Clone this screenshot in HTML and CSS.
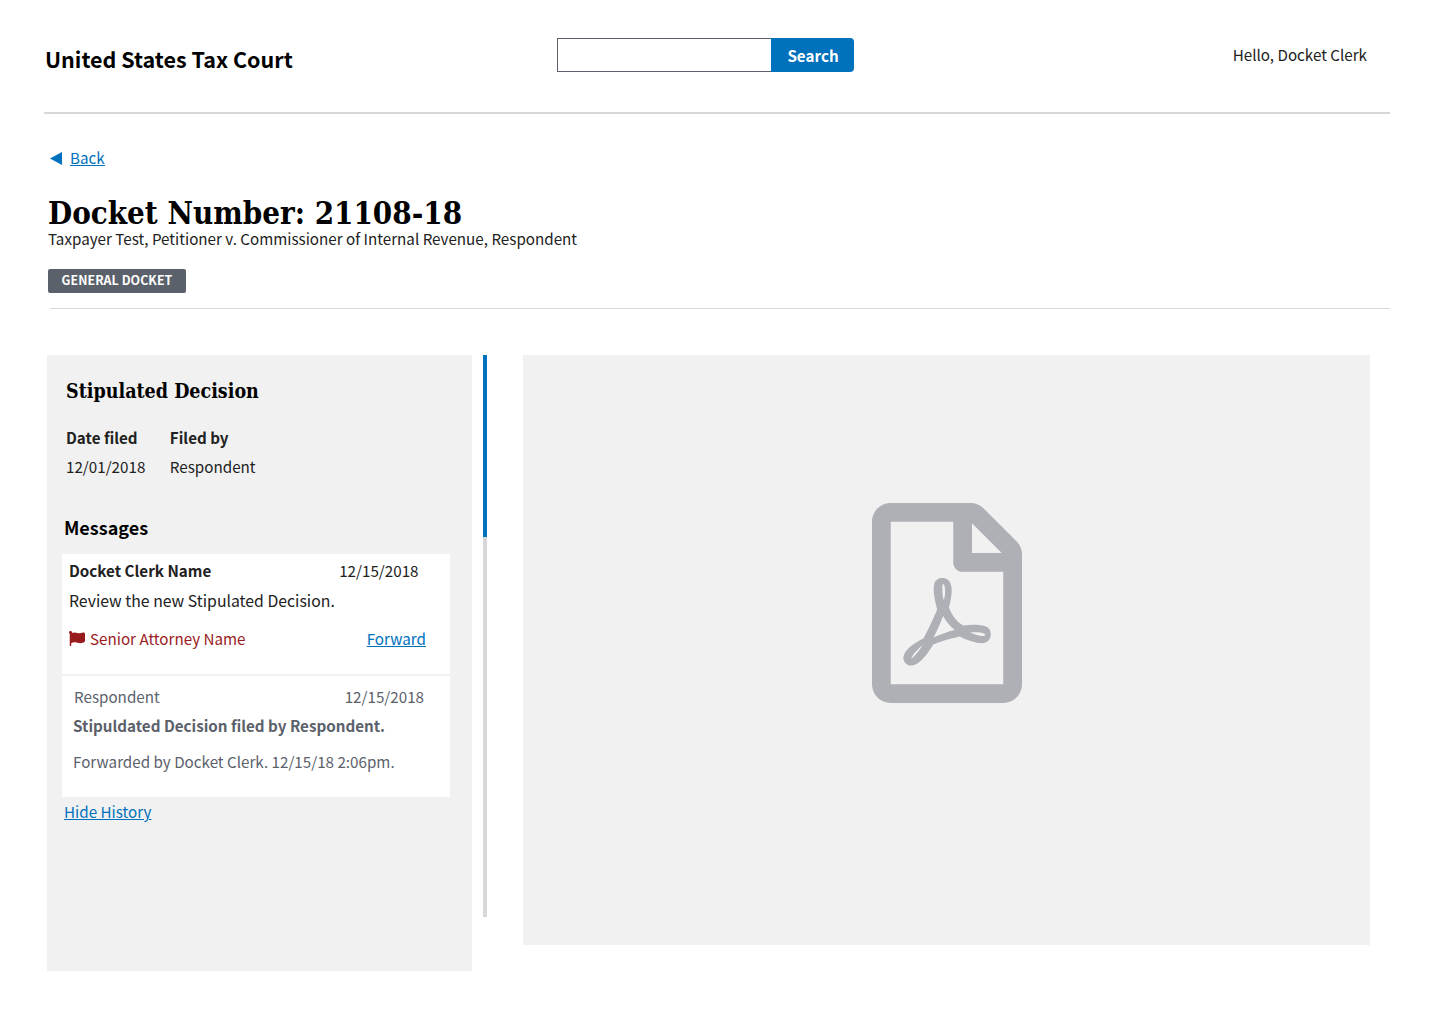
FILE: index.html
```html
<!DOCTYPE html>
<html lang="en">
<head>
    <meta charset="UTF-8">
    <meta name="viewport" content="width=device-width, initial-scale=1.0">
    <title>Docket Number 21108-18</title>
    <link rel="stylesheet" href="styles.css">
</head>
<body>
    <!-- Header -->
    <header class="site-header">
        <div class="site-title">United States Tax Court</div>
        <form class="search">
            <input class="search-input" type="text" aria-label="Search">
            <button class="search-button" type="button">Search</button>
        </form>
        <div class="greeting">Hello, Docket Clerk</div>
    </header>

    <main>
        <a class="back-link" href="#">
            <svg class="back-arrow" viewBox="0 0 12 12" preserveAspectRatio="none"><path d="M12 0v12L0 6z"/></svg>
            <span>Back</span>
        </a>

        <div class="case-head">
            <h1 class="docket-number">Docket Number: 21108-18</h1>
            <p class="case-caption">Taxpayer Test, Petitioner v. Commissioner of Internal Revenue, Respondent</p>
            <span class="tag">General Docket</span>
        </div>
        <hr class="case-rule">

        <div class="workspace">
            <!-- Document details -->
            <section class="details">
                <h2 class="doc-title">Stipulated Decision</h2>
                <div class="meta">
                    <div class="meta-col">
                        <div class="meta-label">Date filed</div>
                        <div class="meta-value">12/01/2018</div>
                    </div>
                    <div class="meta-col">
                        <div class="meta-label">Filed by</div>
                        <div class="meta-value">Respondent</div>
                    </div>
                </div>

                <h3 class="messages-title">Messages</h3>
                <div class="messages">
                    <div class="message">
                        <div class="message-row">
                            <strong>Docket Clerk Name</strong>
                            <span class="message-date">12/15/2018</span>
                        </div>
                        <p class="message-text">Review the new Stipulated Decision.</p>
                        <div class="message-row message-actions">
                            <span class="assignee">
                                <svg class="flag" viewBox="0 0 512 512" preserveAspectRatio="none"><path d="M336.174 80c-49.132 0-93.305-32-161.913-32-31.301 0-58.303 6.482-80.721 15.168a48.04 48.04 0 0 0 2.142-20.727C93.067 19.575 74.167 1.594 51.201.104 23.242-1.71 0 20.431 0 48c0 17.764 9.657 33.262 24 41.562V496c0 8.837 7.163 16 16 16h16c8.837 0 16-7.163 16-16v-83.443C109.869 395.28 143.259 384 199.826 384c49.132 0 93.305 32 161.913 32 58.479 0 101.972-22.617 128.548-39.981C503.846 367.161 512 352.051 512 335.855V95.937c0-34.459-35.264-57.768-66.904-44.117C409.193 67.309 371.641 80 336.174 80z"/></svg>
                                Senior Attorney Name
                            </span>
                            <a class="link" href="#">Forward</a>
                        </div>
                    </div>
                    <div class="message message-old">
                        <div class="message-row message-from">
                            <span>Respondent</span>
                            <span>12/15/2018</span>
                        </div>
                        <p class="message-subject">Stipuldated Decision filed by Respondent.</p>
                        <p class="message-forward">Forwarded by Docket Clerk. 12/15/18 2:06pm.</p>
                    </div>
                </div>
                <a class="link history-link" href="#">Hide History</a>
            </section>

            <div class="scrollbar"><div class="scrollbar-thumb"></div></div>

            <!-- PDF preview -->
            <section class="preview">
                <svg class="pdf-icon" viewBox="0 0 384 512"><path d="M369.9 97.9L286 14C277 5 264.8-.1 252.1-.1H48C21.5 0 0 21.5 0 48v416c0 26.5 21.5 48 48 48h288c26.5 0 48-21.5 48-48V131.9c0-12.7-5.1-25-14.1-34zM332.1 128H256V51.9l76.1 76.1zM48 464V48h160v104c0 13.3 10.7 24 24 24h104v288H48zm250.2-143.7c-12.2-12-47-8.7-64.4-6.5-17.2-10.5-28.7-25-36.8-46.3 3.9-16.1 10.1-40.6 5.4-56-4.2-26.2-37.8-23.6-42.6-5.9-4.4 16.1-.4 38.5 7 67.1-10 23.9-24.9 56-35.4 74.4-20 10.3-47 26.2-51 46.2-3.3 15.8 26 55.2 76.1-31.2 22.4-7.4 46.8-16.5 68.4-20.1 18.9 10.2 41 17 55.8 17 25.5 0 28-28.2 17.5-38.7zm-198.1 77.8c5.1-13.7 24.5-29.5 30.4-35-19 30.3-30.4 35.7-30.4 35zm81.6-190.6c7.4 0 6.7 32.1 1.8 40.8-4.4-13.9-4.3-40.8-1.8-40.8zm-24.4 136.6c9.7-16.9 18-37 24.7-54.7 8.3 15.1 18.9 27.2 30.1 35.5-20.8 4.3-38.9 13.1-54.8 19.2zm131.6-5s-5 6-37.3-7.8c35.1-2.6 40.9 5.4 37.3 7.8z"/></svg>
            </section>
        </div>
    </main>
</body>
</html>
```

FILE: styles.css
```css
body {
    margin: 0;
    background-color: #fff;
    color: #212121;
    font-family: "Noto Sans CJK SC", "Open Sans", sans-serif;
    font-size: 15.2px;
    line-height: 24px;
}
p, h1, h2, h3 {
    margin: 0;
}

/* Header */
.site-header {
    display: flex;
    height: 112px;
    margin: 0 50px 0 44px;
    border-bottom: 2px solid #d6d7d9;
}
.site-title {
    width: 513px;
    padding: 45px 0 0 1px;
    box-sizing: border-box;
    color: #000;
    font-size: 21.5px;
    font-weight: 700;
    line-height: 28px;
}
.search {
    display: flex;
    height: 34px;
    margin-top: 38px;
}
.search-input {
    width: 214px;
    height: 34px;
    box-sizing: border-box;
    border: 1px solid #5b616b;
    border-right: 0;
    border-radius: 0;
    padding: 0;
}
.search-button {
    width: 83px;
    height: 34px;
    border: 0;
    border-radius: 0 4px 4px 0;
    background-color: #0071bc;
    color: #fff;
    font-family: inherit;
    font-size: 15.2px;
    font-weight: 700;
    line-height: 24px;
    padding: 0 0 0 1px;
}
.greeting {
    margin-left: auto;
    padding: 42px 23px 0 0;
}

/* Case heading */
.back-link {
    display: flex;
    align-items: center;
    width: max-content;
    margin: 31px 0 0 50px;
    color: #0071bc;
}
.back-link span {
    margin-left: 8px;
    text-decoration: underline;
}
.back-arrow {
    width: 12px;
    height: 13px;
    fill: #0071bc;
    margin-top: 3px;
}
.case-head {
    padding: 24px 0 0 48px;
}
.docket-number {
    color: #000;
    font-family: "DejaVu Serif Condensed", "DejaVu Serif", serif;
    font-stretch: condensed;
    font-size: 31px;
    font-weight: 700;
    line-height: 40px;
}
.case-caption {
    margin-top: -6px;
    line-height: 22px;
}
.tag {
    display: block;
    width: 138px;
    height: 24px;
    margin-top: 20px;
    border-radius: 2px;
    background-color: #5b616b;
    color: #fff;
    font-size: 12.4px;
    font-weight: 700;
    line-height: 22px;
    text-align: center;
    text-transform: uppercase;
    letter-spacing: 0.05px;
}
.case-rule {
    height: 1px;
    margin: 15px 50px 0;
    border: 0;
    background-color: #d6d7d9;
}

/* Panels */
.workspace {
    display: flex;
    align-items: flex-start;
    margin: 46px 0 0 47px;
}
.details {
    width: 425px;
    height: 616px;
    box-sizing: border-box;
    padding: 21px 22px 0 15px;
    background-color: #f1f1f1;
}
.doc-title {
    margin-left: 4px;
    color: #000;
    font-family: "DejaVu Serif Condensed", "DejaVu Serif", serif;
    font-stretch: condensed;
    font-size: 19.5px;
    font-weight: 700;
    line-height: 32px;
}
.meta {
    display: flex;
    gap: 24.5px;
    margin: 17px 0 0 4px;
}
.meta-label {
    font-weight: 700;
}
.meta-value {
    margin-top: 5px;
}
.messages-title {
    margin: 35px 0 0 2px;
    color: #000;
    font-size: 18px;
    font-weight: 700;
    line-height: 28px;
}
.messages {
    margin-top: 13px;
    background-color: #fff;
}
.message {
    height: 122px;
    box-sizing: border-box;
    padding: 4px 24px 0 7px;
    border-bottom: 2px solid #f1f1f1;
}
.message-row {
    display: flex;
    justify-content: space-between;
}
.message-date {
    margin-right: 7.5px;
}
.message-text {
    margin-top: 7px;
    font-size: 15.8px;
}
.message-actions {
    margin-top: 13px;
}
.assignee {
    display: flex;
    align-items: center;
    color: #981b1e;
}
.flag {
    width: 16px;
    height: 15px;
    margin-right: 5px;
    fill: #981b1e;
}
.message-old {
    height: 121px;
    padding: 8px 26px 0 11px;
    border-bottom: 0;
    color: #5b616b;
}
.message-from {
    padding-left: 1px;
}
.message-subject {
    margin-top: 5px;
    font-weight: 700;
}
.message-forward {
    margin-top: 12px;
}
.link {
    color: #0071bc;
    text-decoration: underline;
}
.history-link {
    display: block;
    width: max-content;
    margin: 2px 0 0 2px;
}
.scrollbar {
    width: 4px;
    height: 562px;
    margin-left: 11px;
    background-color: #d6d7d9;
}
.scrollbar-thumb {
    height: 182px;
    background-color: #0071bc;
}
.preview {
    display: flex;
    justify-content: center;
    width: 847px;
    height: 590px;
    margin-left: 36px;
    padding-top: 148px;
    box-sizing: border-box;
    background-color: #f1f1f1;
}
.pdf-icon {
    width: 150px;
    height: 200px;
    fill: #aeb0b5;
}
```
